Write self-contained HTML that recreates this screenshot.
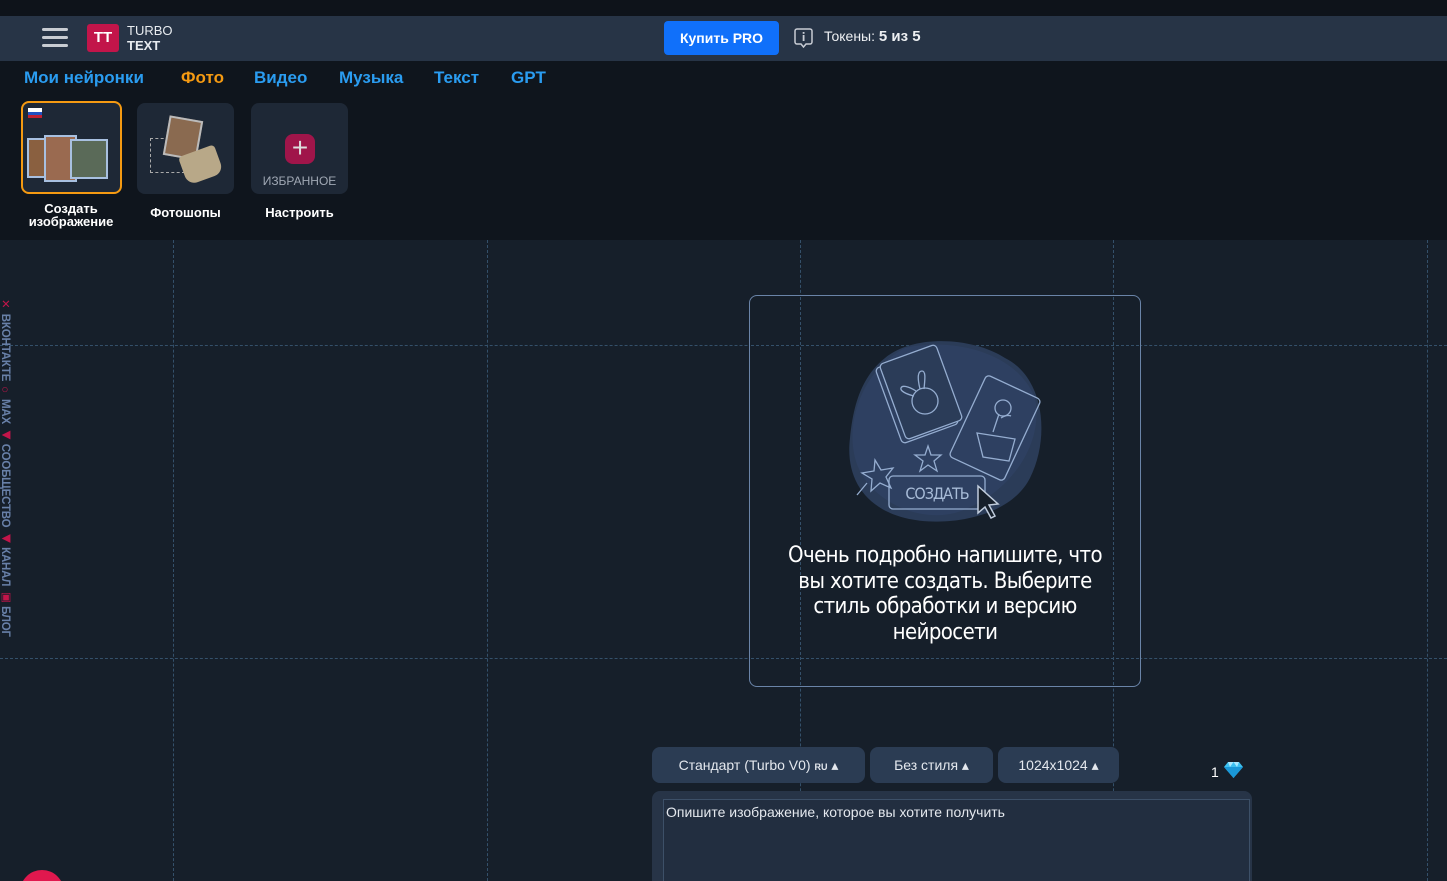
<!DOCTYPE html>
<html><head><meta charset="utf-8"><style>
*{box-sizing:border-box;margin:0;padding:0}
html,body{width:1447px;height:881px;overflow:hidden}
body{background:#161f2a;font-family:"Liberation Sans","DejaVu Sans",sans-serif;position:relative}
.top{position:absolute;left:0;top:0;width:1447px;height:16px;background:#0e131a}
.hdr{position:absolute;left:0;top:16px;width:1447px;height:45px;background:#273446}
.nav{position:absolute;left:0;top:61px;width:1447px;height:179px;background:#0f151d}
.burger span{position:absolute;left:42px;width:26px;height:3px;background:#c8ccd2;border-radius:2px}
.logo{position:absolute;left:87px;top:24px;width:32px;height:28px;background:#c2154a;border-radius:3px;color:#fff;font-weight:bold;font-size:15px;text-align:center;line-height:28px}
.lt{position:absolute;left:127px;top:23px;color:#e8ecf0;font-size:13px;line-height:15px}
.buy{position:absolute;left:664px;top:21px;width:115px;height:34px;background:#1070fa;border-radius:4px;color:#fff;font-weight:bold;font-size:14px;text-align:center;line-height:34px}
.tok{position:absolute;left:824px;top:28px;color:#eef0f3;font-size:14px}
.tabs{position:absolute;top:68px;left:24px;font-size:17px;font-weight:bold;color:#2a9cf0}
.tabs span{position:absolute;white-space:nowrap}
.card{position:absolute;top:103px;width:97px;height:91px;background:#1e2836;border-radius:8px}
.lbl{position:absolute;color:#fff;font-size:13px;font-weight:bold;text-align:center;line-height:13px}
.v{position:absolute;top:240px;width:0;height:641px;border-left:1.5px dashed #34506a}
.h{position:absolute;left:0;width:1447px;height:0;border-top:1.5px dashed #34506a}
.box{position:absolute;left:749px;top:295px;width:392px;height:392px;border:1.5px solid #6a84a8;border-radius:8px;background:#161f2a}
.msg{position:absolute;left:775px;top:543px;width:340px;text-align:center;color:#fff;font-family:"DejaVu Sans Condensed",sans-serif;font-size:22px;line-height:25.5px;letter-spacing:-.6px}
.sel{position:absolute;top:747px;height:36px;background:#2b3c53;border-radius:8px;color:#e4e8ee;font-size:14px;line-height:36px;text-align:center}
.ta{position:absolute;left:652px;top:791px;width:600px;height:100px;background:#273447;border-radius:8px}
.ta div{position:absolute;left:11px;top:8px;right:2px;bottom:0;border:1.5px solid #3d5068;border-bottom:none;background:#222e40;color:#e4e8ee;font-size:14px;padding:4px 2px}
.side{position:absolute;left:-2px;top:297px;writing-mode:vertical-rl;font-size:11.5px;font-weight:bold;color:#6880a8;letter-spacing:-.2px;white-space:nowrap}
.side b{color:#c2154a}
</style></head><body>
<div class="top"></div><div class="hdr"></div><div class="nav"></div>
<div class="burger"><span style="top:28px"></span><span style="top:36px"></span><span style="top:44px"></span></div>
<div class="logo">TT</div>
<div class="lt">TURBO<br><b>TEXT</b></div>
<div class="buy">Купить PRO</div>
<svg style="position:absolute;left:794px;top:28px" width="19" height="20" viewBox="0 0 19 20"><path d="M3 1h13a2 2 0 0 1 2 2v11a2 2 0 0 1-2 2h-4l-2.5 3-2.5-3H3a2 2 0 0 1-2-2V3a2 2 0 0 1 2-2z" fill="none" stroke="#c8ccd4" stroke-width="1.5"/><rect x="8.7" y="7" width="1.8" height="6" fill="#c8ccd4"/><rect x="8.7" y="4" width="1.8" height="1.8" fill="#c8ccd4"/></svg>
<div class="tok">Токены: <b style="font-size:15px">5 из 5</b></div>
<div class="tabs"><span style="left:0">Мои нейронки</span><span style="left:157px;color:#f59a12">Фото</span><span style="left:230px">Видео</span><span style="left:315px">Музыка</span><span style="left:410px">Текст</span><span style="left:487px">GPT</span></div>
<div class="card" style="left:21px;width:101px;height:93px;top:101px;border:2.5px solid #f59a12"></div>
<div style="position:absolute;left:27px;top:138px;width:20px;height:40px;background:#8a6040;border:2px solid #a8c0e0"></div>
<div style="position:absolute;left:44px;top:135px;width:33px;height:47px;background:#9a6a50;border:2px solid #a8c0e0"></div>
<div style="position:absolute;left:70px;top:139px;width:38px;height:40px;background:#5a6a58;border:2px solid #a8c0e0"></div>
<div style="position:absolute;left:28px;top:108px;width:14px;height:4px;background:#fff"></div><div style="position:absolute;left:28px;top:112px;width:14px;height:3px;background:#2050c0"></div><div style="position:absolute;left:28px;top:115px;width:14px;height:3px;background:#c02030"></div>
<div class="card" style="left:137px"></div>
<div style="position:absolute;left:150px;top:138px;width:35px;height:35px;border:1px dashed #aaa"></div>
<div style="position:absolute;left:166px;top:118px;width:34px;height:40px;background:#8a6a50;border:2px solid #bbb;transform:rotate(10deg)"></div>
<div style="position:absolute;left:182px;top:150px;width:38px;height:30px;background:#b8a888;border-radius:4px 4px 10px 10px;transform:rotate(-20deg)"></div>
<div class="card" style="left:251px"></div>
<div style="position:absolute;left:285px;top:134px;width:30px;height:30px;background:#a0154a;border-radius:8px;color:#ddd;font-size:28px;line-height:28px;text-align:center">+</div>
<div style="position:absolute;left:251px;top:174px;width:97px;text-align:center;color:#a0a8b4;font-size:12px">ИЗБРАННОЕ</div>
<div class="lbl" style="left:18px;top:202px;width:106px">Создать<br>изображение</div>
<div class="lbl" style="left:137px;top:206px;width:97px">Фотошопы</div>
<div class="lbl" style="left:251px;top:206px;width:97px">Настроить</div>
<div class="v" style="left:173px"></div><div class="v" style="left:487px"></div><div class="v" style="left:800px"></div><div class="v" style="left:1113px"></div><div class="v" style="left:1427px"></div>
<div class="h" style="top:345px"></div><div class="h" style="top:658px"></div>
<div class="box"></div>
<div class="v" style="left:800px;top:297px;height:388px"></div><div class="v" style="left:1113px;top:297px;height:388px"></div>
<div class="h" style="top:345px;left:751px;width:388px"></div><div class="h" style="top:658px;left:751px;width:388px"></div>
<svg style="position:absolute;left:845px;top:338px" width="200" height="190" viewBox="0 0 200 190">
<path d="M40 20C70-5 130 0 160 20 200 40 205 100 185 140 165 180 100 190 60 180 20 170 0 140 5 100 8 70 15 40 40 20z" fill="#2b3c58"/>
<path d="M60 10C100 0 170 10 190 60 200 110 160 160 110 175 70 185 20 160 10 120 0 80 20 30 60 10z" fill="#31446a" opacity=".5"/>
<g fill="none" stroke="#95add0" stroke-width="1.3">
<rect x="42" y="18" width="60" height="80" rx="4" transform="rotate(-20 72 58)"/>
<rect x="46" y="14" width="60" height="80" rx="4" transform="rotate(-20 76 54)" fill="#2b3c58"/>
<circle cx="80" cy="63" r="13"/><path d="M75 51c-3-12-2-18 2-18s3 8 2 18M71 53c-8-5-14-6-15-3s5 6 13 8"/>
<rect x="120" y="45" width="60" height="90" rx="4" transform="rotate(25 150 90)"/>
<path d="M132 95l38 6-6 22-26-4zM148 94l6-18M156 80c6-4 10-2 10-2"/><circle cx="158" cy="70" r="8"/>
<path d="M30 122l6 10 12-2-7 9 5 11-11-5-9 8 1-12-10-6 12-2zM22 145l-10 12M83 108l3 9 10 0-7 6 3 10-9-6-8 6 3-10-8-6 10 0z"/>
<rect x="44" y="138" width="96" height="33" rx="4"/></g>
<text x="92" y="161" text-anchor="middle" fill="#a8bcd8" font-size="16" font-family="DejaVu Sans Condensed,sans-serif" letter-spacing="-1">СОЗДАТЬ</text>
<path d="M133 148l20 18-9 1 6 11-4 2-6-11-7 6z" fill="#161f2a" stroke="#c0ccdc" stroke-width="1.5"/>
</svg>
<div class="msg">Очень подробно напишите, что вы хотите создать. Выберите стиль обработки и версию нейросети</div>
<div class="sel" style="left:652px;width:213px">Стандарт (Turbo V0) <b style="font-size:9px">RU</b> ▴</div>
<div class="sel" style="left:870px;width:123px">Без стиля ▴</div>
<div class="sel" style="left:998px;width:121px">1024x1024 ▴</div>
<div style="position:absolute;left:1211px;top:764px;color:#fff;font-size:14px">1</div>
<svg style="position:absolute;left:1224px;top:761px" width="19" height="18" viewBox="0 0 19 18"><path d="M4 1h11l4 5-9.5 11L0 6z" fill="#3cc0f0"/><path d="M0 6h19L9.5 17z" fill="#1a98d8"/><path d="M4 1l2 5 3.5-5 3.5 5 2-5" fill="#a8e8ff"/></svg>
<div class="ta"><div>Опишите изображение, которое вы хотите получить</div></div>
<div class="side"><b>✕</b> ВКОНТАКТЕ <b>○</b> MAX <b>◀</b> СООБЩЕСТВО <b>◀</b> КАНАЛ <b>▣</b> БЛОГ</div>
<div style="position:absolute;left:20px;top:870px;width:44px;height:44px;border-radius:50%;background:#e0184e"></div>
</body></html>
